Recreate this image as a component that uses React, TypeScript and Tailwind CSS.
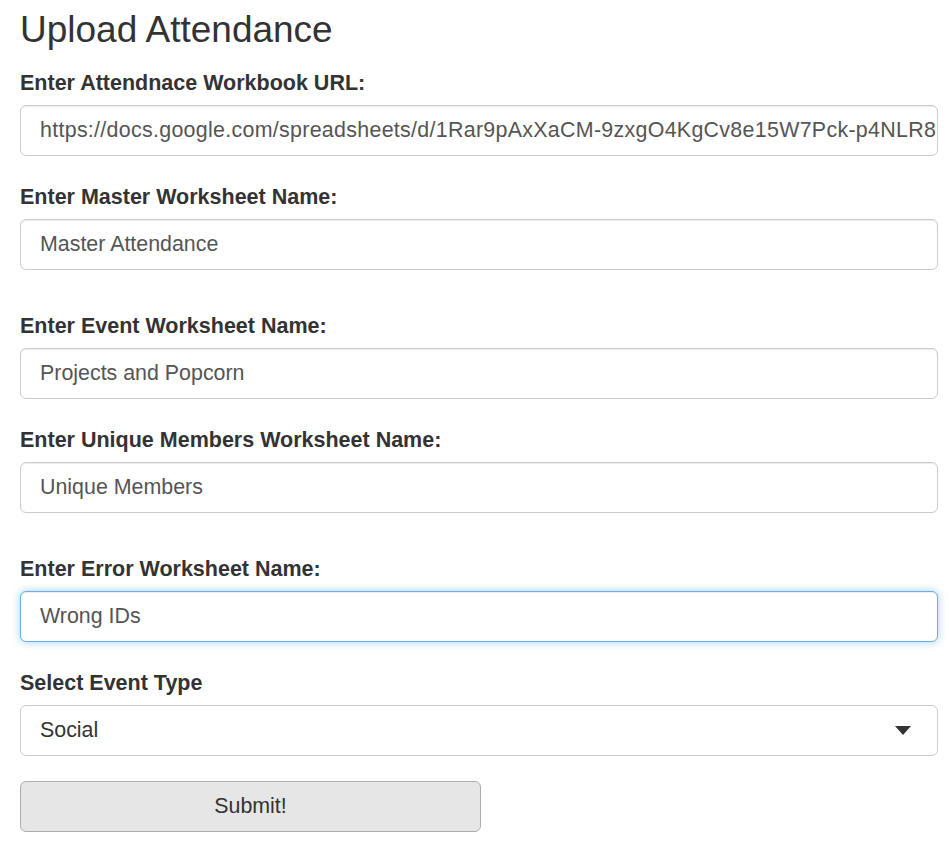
import React from 'react';

const font = { fontFamily: '"Liberation Sans", Arial, sans-serif' };

interface FieldProps {
  label: string;
  value: string;
  focused?: boolean;
  spaced?: boolean;
  wide?: boolean;
}

const TextField: React.FC<FieldProps> = ({ label, value, focused, spaced, wide }) => (
  <div className={spaced ? 'pt-[15px] mb-[26px]' : 'mb-[26px]'}>
    <label className="block text-[21.5px] leading-[30px] font-bold text-[#333] mb-[7px]">{label}</label>
    <div
      className={
        focused
          ? 'h-[51px] flex items-center pl-[19px] rounded-[6px] border border-[#66afe9] bg-white text-[21.4px] text-[#555] whitespace-nowrap overflow-hidden shadow-[inset_0_1px_1px_rgba(0,0,0,0.075),0_0_8px_rgba(102,175,233,0.6)]'
          : 'h-[51px] flex items-center pl-[19px] rounded-[6px] border border-[#ccc] bg-white text-[21.4px] text-[#555] whitespace-nowrap overflow-hidden shadow-[inset_0_1px_1px_rgba(0,0,0,0.075)]'
      }
    >
      <span className={wide ? 'tracking-[0.3px]' : ''}>{value}</span>
      {wide && <span className="ml-[2px] w-[1px] h-[22px] bg-[#bbb]" />}
    </div>
  </div>
);

export default function App() {
  return (
    <div className="min-h-screen bg-white pl-[20px] pr-[11px] pt-[10px]" style={font}>
      <h3 className="text-[37px] leading-[40px] text-[#333] mb-[18px]">Upload Attendance</h3>

      <TextField
        label="Enter Attendnace Workbook URL:"
        value="https://docs.google.com/spreadsheets/d/1Rar9pAxXaCM-9zxgO4KgCv8e15W7Pck-p4NLR8"
        wide
      />
      <TextField label="Enter Master Worksheet Name:" value="Master Attendance" />
      <TextField label="Enter Event Worksheet Name:" value="Projects and Popcorn" spaced />
      <TextField label="Enter Unique Members Worksheet Name:" value="Unique Members" />
      <TextField label="Enter Error Worksheet Name:" value="Wrong IDs" focused spaced />

      <div className="mb-[25px]">
        <label className="block text-[21.5px] leading-[30px] font-bold text-[#333] mb-[7px]">Select Event Type</label>
        <div className="h-[51px] flex items-center justify-between pl-[19px] pr-[26px] rounded-[6px] border border-[#ccc] bg-white text-[21.4px] text-[#333]">
          <span>Social</span>
          <svg width="16" height="9" viewBox="0 0 16 9" aria-hidden="true">
            <path d="M0 0 L16 0 L8 9 Z" fill="#333" />
          </svg>
        </div>
      </div>

      <button className="w-[461px] h-[51px] rounded-[6px] border border-[#adadad] bg-[#e6e6e6] text-[21.4px] text-[#333]">
        Submit!
      </button>
    </div>
  );
}
